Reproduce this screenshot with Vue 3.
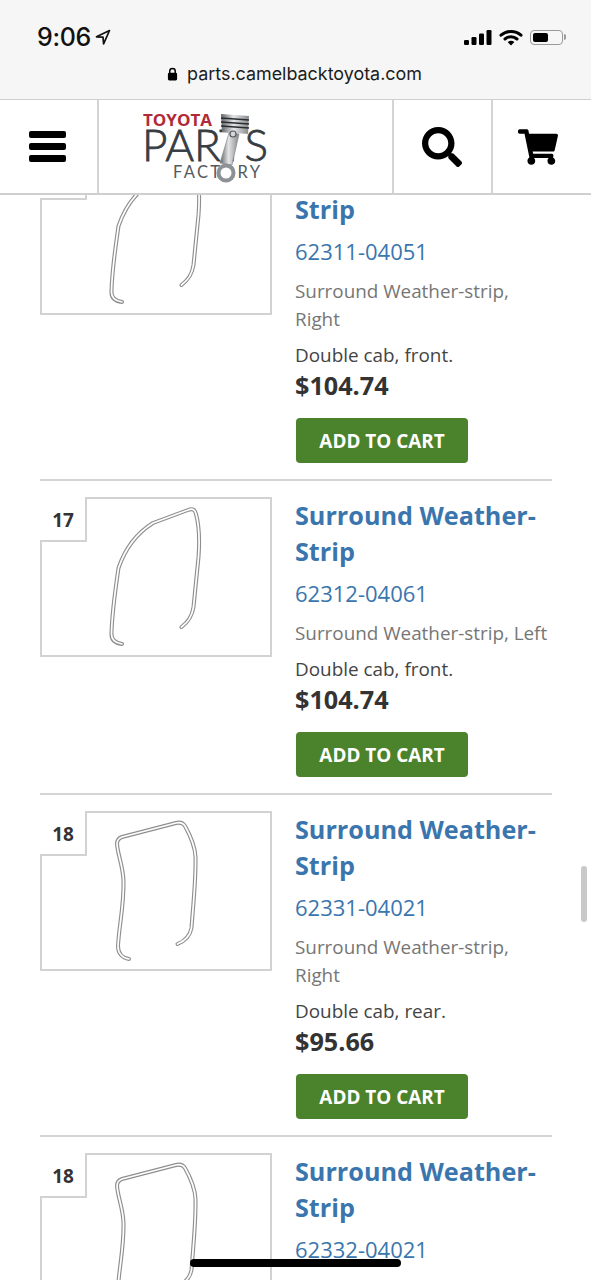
<script setup>
import { ref } from "vue";

// seal outlines, drawn in the coordinates of the 232x160 thumbnail
const frontSeal =
  "M82 147C75 146 71 143 71.5 136C72 115 75 95 78.5 71C85 52 97 36 113 26L148 13C153 11 155 13 156 17C159 28 160 40 158.5 60L153.5 110C152 120 148 125 141.5 130";
const rearSeal =
  "M89 148C82 147 78 142 78 135C79 115 84 95 83.5 70C83 55 78 45 77 33C77 29 79 27 82 26L136 12C140 11 143 12 145 15C150 24 155 34 155.5 46C156 70 153 95 151.5 117C150 125 145 130 137.5 133";

const parts = ref([
  { id: 1, num: "", partNo: "62311-04051", desc: "Surround Weather-strip, Right", note: "Double cab, front.", price: "$104.74", seal: frontSeal },
  { id: 2, num: "17", partNo: "62312-04061", desc: "Surround Weather-strip, Left", note: "Double cab, front.", price: "$104.74", seal: frontSeal },
  { id: 3, num: "18", partNo: "62331-04021", desc: "Surround Weather-strip, Right", note: "Double cab, rear.", price: "$95.66", seal: rearSeal },
  { id: 4, num: "18", partNo: "62332-04021", desc: "Surround Weather-strip, Left", note: "Double cab, rear.", price: "$95.66", seal: rearSeal },
]);
</script>

<template>
  <div class="page">
    <div class="browser-bar">
      <div class="status">
        <div class="time-wrap">
          <span class="time">9:06</span>
          <svg class="arrow" viewBox="0 0 16 16" width="16" height="16">
            <path d="M14.5 1.5L1.5 7.8L8 8.2L8.6 14.8Z" fill="none" stroke="#111" stroke-width="1.7" stroke-linejoin="round" />
          </svg>
        </div>
        <div class="status-icons">
          <svg viewBox="0 0 28 15" width="28" height="15">
            <rect x="0" y="10" width="5" height="5" rx="1.2" fill="#000" />
            <rect x="7.5" y="7" width="5" height="8" rx="1.2" fill="#000" />
            <rect x="15" y="3.5" width="5" height="11.5" rx="1.2" fill="#000" />
            <rect x="22.5" y="0" width="5" height="15" rx="1.2" fill="#000" />
          </svg>
          <svg viewBox="0 0 24 17" width="24" height="17">
            <path d="M2 6.2C7.5 1.2 16.5 1.2 22 6.2" fill="none" stroke="#000" stroke-width="3" stroke-linecap="round" />
            <path d="M6 10C9.5 7 14.5 7 18 10" fill="none" stroke="#000" stroke-width="3" stroke-linecap="round" />
            <path d="M12 16.5L8.6 13C10.6 11.4 13.4 11.4 15.4 13Z" fill="#000" />
          </svg>
          <div class="battery"><div class="battery-fill"></div></div>
        </div>
      </div>
      <div class="url">
        <svg viewBox="0 0 12 15" width="11" height="14">
          <path d="M3 7V4.5a3 3 0 0 1 6 0V7" fill="none" stroke="#000" stroke-width="1.6" />
          <rect x="1" y="6" width="10" height="8.5" rx="1.5" fill="#000" />
        </svg>
        <span>parts.camelbacktoyota.com</span>
      </div>
    </div>

    <header class="site-header">
      <div class="cell menu-cell">
        <span class="bar"></span>
        <span class="bar"></span>
        <span class="bar"></span>
      </div>
      <div class="cell logo-cell">
        <svg class="logo" viewBox="140 113 132 74" width="132" height="74">
          <defs>
            <linearGradient id="steel" x1="0" x2="1" y1="0" y2="0">
              <stop offset="0" stop-color="#5f6367" />
              <stop offset="0.45" stop-color="#e4e5e6" />
              <stop offset="1" stop-color="#85888c" />
            </linearGradient>
          </defs>
          <text x="143" y="129" class="logo-toyota" textLength="69" lengthAdjust="spacingAndGlyphs">TOYOTA</text>
          <text x="142" y="164" class="logo-parts" textLength="126" lengthAdjust="spacing">PARTS</text>
          <text x="173" y="181" class="logo-factory" textLength="87" lengthAdjust="spacing">FACTORY</text>
          <path d="M221 117L249 119L248 137L222 135Z" fill="url(#steel)" />
          <path d="M221 121L249 123M221 125L249 127M221 129L249 131" stroke="#2a2c2f" stroke-width="1.6" />
          <path d="M229 136L239 137L232 168L220 166Z" fill="url(#steel)" stroke="#777a7e" stroke-width="0.6" />
          <circle cx="233" cy="137" r="3" fill="#d5d6d8" stroke="#55585c" stroke-width="1.2" />
          <circle cx="226" cy="176" r="7.5" fill="#fff" stroke="#8d9094" stroke-width="4" />
        </svg>
      </div>
      <div class="cell icon-cell search-cell">
        <svg viewBox="0 0 512 512" width="40" height="40">
          <path d="M505 442.7L405.3 343c-4.5-4.5-10.6-7-17-7H372c27.6-35.3 44-79.7 44-128C416 93.1 322.9 0 208 0S0 93.1 0 208s93.1 208 208 208c48.3 0 92.7-16.4 128-44v16.3c0 6.4 2.5 12.5 7 17l99.7 99.7c9.4 9.4 24.6 9.4 33.9 0l28.3-28.3c9.4-9.4 9.4-24.6.1-34zM208 336c-70.7 0-128-57.2-128-128 0-70.7 57.2-128 128-128 70.7 0 128 57.2 128 128 0 70.7-57.2 128-128 128z" fill="#000" />
        </svg>
      </div>
      <div class="cell icon-cell last">
        <svg viewBox="0 0 576 512" width="40" height="36">
          <path d="M528.12 301.319l47.273-208C578.806 78.301 567.391 64 551.99 64H159.208l-9.166-44.81C147.758 8.021 137.93 0 126.529 0H24C10.745 0 0 10.745 0 24v16c0 13.255 10.745 24 24 24h69.883l70.248 343.435C147.325 417.1 136 435.222 136 456c0 30.928 25.072 56 56 56s56-25.072 56-56c0-15.674-6.447-29.835-16.824-40h209.647C430.447 426.165 424 440.326 424 456c0 30.928 25.072 56 56 56s56-25.072 56-56c0-22.172-12.888-41.332-31.579-50.405l5.517-24.276c3.413-15.018-8.002-29.319-23.403-29.319H218.117l-6.545-32h293.145c11.206 0 20.92-7.754 23.403-18.681z" fill="#000" />
        </svg>
      </div>
    </header>

    <main class="list-view">
      <div class="list">
        <article v-for="part in parts" :key="part.id" class="row">
          <div class="thumb">
            <svg viewBox="0 0 232 160" width="232" height="160">
              <path d="M46 1H231V159H1V44H46Z" fill="#fff" stroke="#d2d2d2" stroke-width="2" />
              <path :d="part.seal" fill="none" stroke="#8f8f8f" stroke-width="4" stroke-linecap="round" stroke-linejoin="round" />
              <path :d="part.seal" fill="none" stroke="#fff" stroke-width="1.7" stroke-linecap="round" stroke-linejoin="round" />
            </svg>
            <span class="num">{{ part.num }}</span>
          </div>
          <div class="info">
            <a class="title">Surround Weather-Strip</a>
            <a class="part-no">{{ part.partNo }}</a>
            <p class="desc">{{ part.desc }}</p>
            <p class="note">{{ part.note }}</p>
            <p class="price">{{ part.price }}</p>
            <button class="add-btn">ADD TO CART</button>
          </div>
        </article>
      </div>
    </main>

    <div class="scrollbar"></div>
    <div class="home-indicator"></div>
  </div>
</template>

<style scoped>
.page {
  position: relative;
  display: flex;
  flex-direction: column;
  width: 591px;
  height: 1280px;
  overflow: hidden;
  background: #fff;
  font-family: "Open Sans", sans-serif;
}

.browser-bar {
  height: 99px;
  box-sizing: border-box;
  background: #f5f6f5;
  font-family: Inter, "Liberation Sans", sans-serif;
  color: #111;
}

.status {
  display: flex;
  justify-content: space-between;
  align-items: center;
  height: 30px;
  padding: 22px 25px 0 37px;
}

.time-wrap {
  display: flex;
  align-items: center;
  gap: 4px;
}

.time {
  font-size: 25px;
  font-weight: 500;
  letter-spacing: -0.3px;
}

.status-icons {
  display: flex;
  align-items: center;
  gap: 7px;
}

.battery {
  position: relative;
  width: 33px;
  height: 15px;
  box-sizing: border-box;
  border: 1.5px solid #9a9a9a;
  border-radius: 4px;
  padding: 2px;
  margin-right: 3px;
}

.battery::after {
  content: "";
  position: absolute;
  right: -4px;
  top: 3px;
  width: 2px;
  height: 6px;
  border-radius: 0 2px 2px 0;
  background: #9a9a9a;
}

.battery-fill {
  width: 15px;
  height: 100%;
  border-radius: 2px;
  background: #000;
}

.url {
  display: flex;
  justify-content: center;
  align-items: center;
  gap: 9px;
  margin-top: 10px;
  padding-right: 2px;
  font-size: 17.9px;
  line-height: 24px;
  color: #1c1c1c;
}

.site-header {
  display: flex;
  flex: none;
  height: 96px;
  box-sizing: border-box;
  border-top: 1px solid #cfcfcf;
  border-bottom: 2px solid #cfcfcf;
  background: #fff;
}

.cell {
  display: flex;
  align-items: center;
  justify-content: center;
  box-sizing: border-box;
  border-right: 2px solid #d4d4d4;
}

.menu-cell {
  flex-direction: column;
  gap: 5px;
  width: 99px;
  padding-right: 3px;
}

.bar {
  width: 37px;
  height: 7px;
  border-radius: 2px;
  background: #000;
}

.logo-cell {
  justify-content: flex-start;
  width: 295px;
  padding-left: 41px;
}

.logo-toyota {
  font-family: "Open Sans", sans-serif;
  font-size: 16px;
  font-weight: 700;
  fill: #b02a37;
}

.logo-parts {
  font-family: Lato, sans-serif;
  font-size: 44px;
  font-weight: 300;
  fill: #373c42;
  stroke: #373c42;
  stroke-width: 0.8px;
}

.logo-factory {
  font-family: Lato, sans-serif;
  font-size: 16.5px;
  fill: #55595e;
}

.icon-cell {
  width: 99px;
}

.search-cell {
  padding-right: 2px;
}

.icon-cell.last {
  width: 98px;
  border-right: none;
  padding-right: 8px;
}

.list-view {
  flex: 1;
  overflow: hidden;
}

.list {
  margin: -56px 39px 0 40px;
}

.row {
  display: flex;
  gap: 23px;
  padding: 16px 0;
  border-bottom: 2px solid #d4d4d4;
}

.thumb {
  position: relative;
  flex: none;
  width: 232px;
  height: 160px;
}

.num {
  position: absolute;
  left: 0;
  top: 8px;
  width: 46px;
  text-align: center;
  font-size: 19px;
  line-height: 30px;
  font-weight: 700;
  color: #333;
}

.info {
  flex: 1;
  min-width: 0;
}

.title {
  display: block;
  font-size: 25.2px;
  line-height: 36px;
  font-weight: 700;
  color: #3a76ad;
}

.part-no {
  display: block;
  margin-top: 9px;
  font-size: 22px;
  line-height: 30px;
  color: #3a76ad;
}

.desc {
  margin: 11px 0 0;
  font-size: 18.85px;
  line-height: 28px;
  color: #767676;
}

.note {
  margin: 8px 0 0;
  font-size: 18.9px;
  line-height: 28px;
  color: #444;
}

.price {
  margin: -1px 0 0;
  font-size: 25.2px;
  line-height: 34px;
  font-weight: 700;
  color: #333;
}

.add-btn {
  display: block;
  width: 172px;
  height: 45px;
  margin: 16px 0 0 1px;
  padding: 0;
  border: none;
  border-radius: 4px;
  background: #4b822c;
  color: #fff;
  font-family: "Open Sans", sans-serif;
  font-size: 18.9px;
  font-weight: 700;
}

.scrollbar {
  position: absolute;
  left: 581px;
  top: 866px;
  width: 6px;
  height: 56px;
  border-radius: 3px;
  background: #c9c9c9;
}

.home-indicator {
  position: absolute;
  left: 190px;
  top: 1259px;
  width: 211px;
  height: 8px;
  border-radius: 4px;
  background: #000;
}
</style>
